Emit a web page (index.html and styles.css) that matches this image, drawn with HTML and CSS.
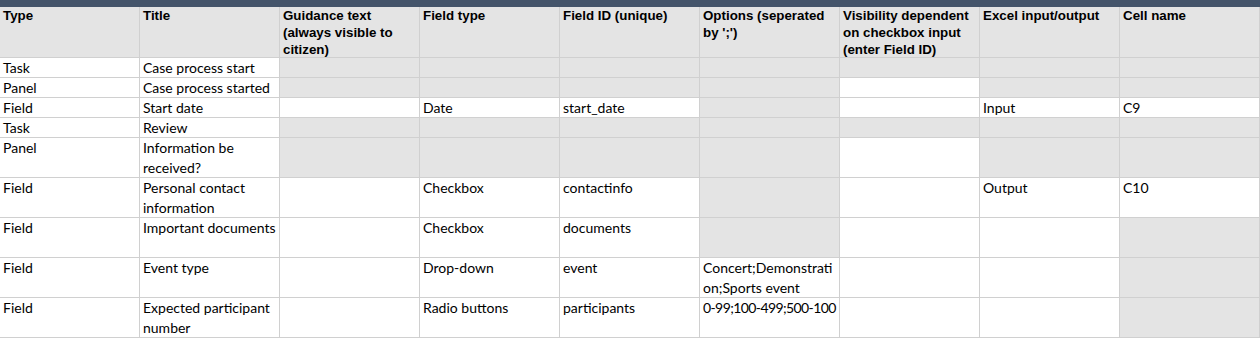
FILE: index.html
```html
<!DOCTYPE html>
<html lang="en">
<head>
<meta charset="utf-8">
<title>Form definition sheet</title>
<link rel="stylesheet" href="styles.css">
</head>
<body>
<div class="topbar"></div>
<div class="sheet">
  <div class="c h">Type</div>
  <div class="c h">Title</div>
  <div class="c h">Guidance text (always visible to citizen)</div>
  <div class="c h">Field type</div>
  <div class="c h">Field ID (unique)</div>
  <div class="c h">Options (seperated by ';')</div>
  <div class="c h">Visibility dependent on checkbox input (enter Field ID)</div>
  <div class="c h">Excel input/output</div>
  <div class="c h">Cell name</div>

  <div class="c">Task</div>
  <div class="c">Case process start</div>
  <div class="c g"></div>
  <div class="c g"></div>
  <div class="c g"></div>
  <div class="c g"></div>
  <div class="c g"></div>
  <div class="c g"></div>
  <div class="c g"></div>

  <div class="c">Panel</div>
  <div class="c">Case process started</div>
  <div class="c g"></div>
  <div class="c g"></div>
  <div class="c g"></div>
  <div class="c g"></div>
  <div class="c"></div>
  <div class="c g"></div>
  <div class="c g"></div>

  <div class="c">Field</div>
  <div class="c">Start date</div>
  <div class="c"></div>
  <div class="c">Date</div>
  <div class="c">start_date</div>
  <div class="c g"></div>
  <div class="c"></div>
  <div class="c">Input</div>
  <div class="c">C9</div>

  <div class="c">Task</div>
  <div class="c">Review</div>
  <div class="c g"></div>
  <div class="c g"></div>
  <div class="c g"></div>
  <div class="c g"></div>
  <div class="c g"></div>
  <div class="c g"></div>
  <div class="c g"></div>

  <div class="c">Panel</div>
  <div class="c">Information be received?</div>
  <div class="c g"></div>
  <div class="c g"></div>
  <div class="c g"></div>
  <div class="c g"></div>
  <div class="c"></div>
  <div class="c g"></div>
  <div class="c g"></div>

  <div class="c">Field</div>
  <div class="c">Personal contact information</div>
  <div class="c"></div>
  <div class="c">Checkbox</div>
  <div class="c">contactinfo</div>
  <div class="c g"></div>
  <div class="c"></div>
  <div class="c">Output</div>
  <div class="c">C10</div>

  <div class="c">Field</div>
  <div class="c nw">Important documents</div>
  <div class="c"></div>
  <div class="c">Checkbox</div>
  <div class="c">documents</div>
  <div class="c g"></div>
  <div class="c"></div>
  <div class="c"></div>
  <div class="c g"></div>

  <div class="c">Field</div>
  <div class="c">Event type</div>
  <div class="c"></div>
  <div class="c">Drop-down</div>
  <div class="c">event</div>
  <div class="c">Concert;Demonstrati<br>on;Sports event</div>
  <div class="c"></div>
  <div class="c"></div>
  <div class="c g"></div>

  <div class="c">Field</div>
  <div class="c">Expected participant number</div>
  <div class="c"></div>
  <div class="c">Radio buttons</div>
  <div class="c">participants</div>
  <div class="c nw tight">0-99;100-499;500-100</div>
  <div class="c"></div>
  <div class="c"></div>
  <div class="c g"></div>
</div>
</body>
</html>
```
FILE: styles.css
```css
html, body {
  margin: 0;
  padding: 0;
  background: #ffffff;
}

body {
  width: 1260px;
  height: 338px;
  overflow: hidden;
  font-family: "Lato", "Liberation Sans", sans-serif;
  color: #000000;
}

.topbar {
  height: 7px;
  background: #44546a;
}

.sheet {
  display: grid;
  grid-template-columns: repeat(9, 140px);
  grid-template-rows: 51px repeat(4, 20px) repeat(5, 40px);
}

.c {
  box-sizing: border-box;
  border-right: 1px solid #d0d0d0;
  border-bottom: 1px solid #d0d0d0;
  padding: 0 2px 0 3px;
  font-size: 14px;
  line-height: 20px;
  overflow: hidden;
  background: #ffffff;
}

.c.g {
  background: #e4e4e4;
}

.c.h {
  background: #e4e4e4;
  font-family: "Liberation Sans", Arial, sans-serif;
  font-weight: bold;
  font-size: 13.33px;
  line-height: 17px;
  padding-top: 0;
}

.c.nw {
  white-space: nowrap;
}

.c.tight {
  letter-spacing: -0.6px;
  padding-right: 0;
}
```
